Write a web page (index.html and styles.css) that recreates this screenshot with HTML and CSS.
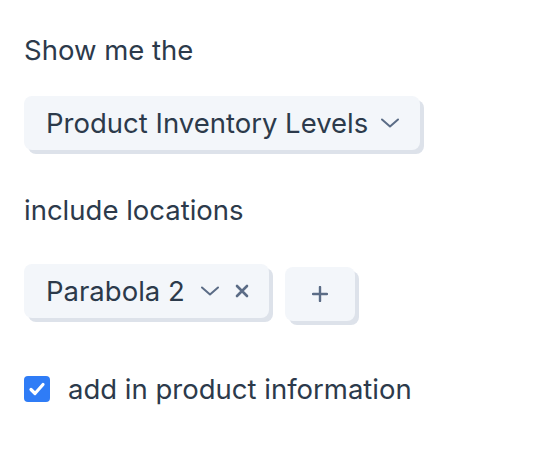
FILE: index.html
```html
<!DOCTYPE html>
<html lang="en">
<head>
<meta charset="utf-8">
<title>Query builder</title>
<link rel="stylesheet" href="styles.css">
</head>
<body>
<main class="form">
  <p class="label">Show me the</p>
  <div class="row row-first">
    <button class="select select-main" type="button">
      <span>Product Inventory Levels</span>
      <svg class="chev" viewBox="0 0 18 10" width="18" height="10"><path d="M1 1.5 L9 8.5 L17 1.5" fill="none" stroke="currentColor" stroke-width="2" stroke-linecap="round" stroke-linejoin="round"/></svg>
    </button>
  </div>
  <p class="label">include locations</p>
  <div class="row row-chips">
    <div class="select chip">
      <span>Parabola 2</span>
      <svg class="chev" viewBox="0 0 18 10" width="18" height="10"><path d="M1 1.5 L9 8.5 L17 1.5" fill="none" stroke="currentColor" stroke-width="2" stroke-linecap="round" stroke-linejoin="round"/></svg>
      <svg class="close" viewBox="0 0 14 14" width="14" height="14"><path d="M2 2 L12 12 M12 2 L2 12" fill="none" stroke="currentColor" stroke-width="2.6" stroke-linecap="round"/></svg>
    </div>
    <button class="add" type="button" aria-label="Add location">
      <svg viewBox="0 0 16 16" width="16" height="16"><path d="M8 1 V15 M1 8 H15" fill="none" stroke="currentColor" stroke-width="2.4" stroke-linecap="round"/></svg>
    </button>
  </div>
  <label class="check">
    <span class="box"><svg viewBox="0 0 26 26" width="26" height="26"><path d="M7 13.5 L11 17.5 L19 8.5" fill="none" stroke="#fff" stroke-width="3.2" stroke-linecap="round" stroke-linejoin="round"/></svg></span>
    <span>add in product information</span>
  </label>
</main>
</body>
</html>
```
FILE: styles.css
```css
html, body {
  margin: 0;
  background: #ffffff;
}
body {
  font-family: "Inter", "Liberation Sans", sans-serif;
  color: #2c3a4b;
  font-size: 27.5px;
}
.form {
  padding: 33px 24px 24px 24px;
  display: flex;
  flex-direction: column;
  align-items: flex-start;
}
.label {
  margin: 0;
  line-height: 34px;
}
.row {
  display: flex;
  align-items: flex-start;
  gap: 16px;
}
.row-first {
  margin: 29px 0 43px;
}
.row-chips {
  margin: 37px 0 51px;
}
.select {
  display: inline-flex;
  align-items: center;
  height: 54px;
  padding: 0 22px;
  border: 0;
  border-radius: 8px;
  background: #f3f6fa;
  box-shadow: 4px 4px 0 #dde2ea;
  font: inherit;
  line-height: 34px;
  color: inherit;
  gap: 16px;
  cursor: pointer;
}
.select-main {
  gap: 13px;
  padding-right: 21px;
}
.chev {
  color: #5b6c86;
  display: block;
}
.chip {
  padding-right: 20px;
}
.close {
  color: #5b6c86;
  display: block;
}
.add {
  margin-top: 3px;
  width: 70px;
  height: 54px;
  border: 0;
  border-radius: 8px;
  background: #f3f6fa;
  box-shadow: 4px 4px 0 #dde2ea;
  color: #5b6c86;
  display: flex;
  align-items: center;
  justify-content: center;
  padding: 0;
}
.add svg {
  display: block;
}
.check {
  display: flex;
  align-items: center;
  gap: 18px;
  line-height: 34px;
}
.box {
  width: 26px;
  height: 26px;
  border-radius: 4px;
  background: #2f7cf6;
  display: block;
}
.box svg {
  display: block;
}
```
